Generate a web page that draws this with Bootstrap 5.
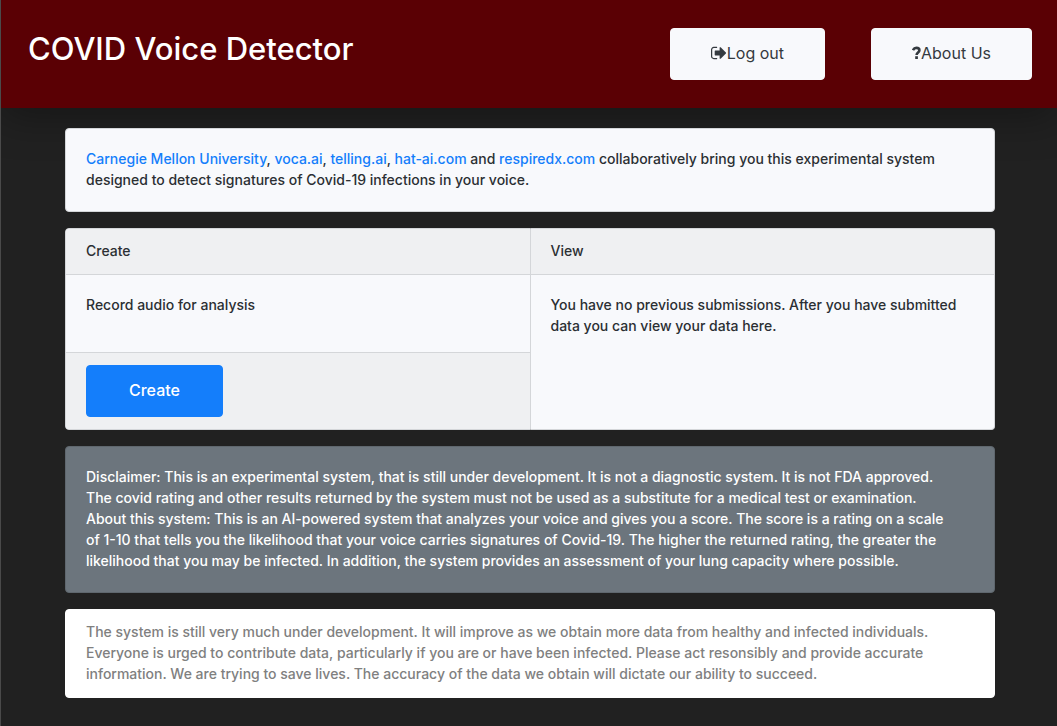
<!DOCTYPE html>
<html lang="en">
<head>
<meta charset="utf-8">
<meta name="viewport" content="width=device-width, initial-scale=1">
<title>COVID Voice Detector</title>
<link href="https://cdn.jsdelivr.net/npm/bootstrap@5.3.0/dist/css/bootstrap.min.css" rel="stylesheet">
<style>
  body { background: #212121; color: #2b2f33; font-family: Inter, "Open Sans", sans-serif; font-size: 14px; font-weight: 500; line-height: 21px; border-left: 1px solid #4a4a4a; min-height: 100vh; }
  .top-bar { background: #5a0004; padding: 28px 25px 28px 27px; box-shadow: 0 8px 40px rgba(0, 0, 0, .35); }
  .top-bar h1 { font-size: 31px; line-height: 42px; font-weight: 500; }
  .top-actions { gap: 46px; }
  .btn { border-radius: 4px; font-size: 16px; line-height: 24px; padding: 12px 40px 14px; }
  .btn-light { --bs-btn-color: #343a40; --bs-btn-bg: #f8f9fc; --bs-btn-border-color: #f8f9fc; }
  .btn-primary { --bs-btn-bg: #147efb; --bs-btn-border-color: #147efb; font-weight: 500; padding-left: 42px; padding-right: 42px; }
  .btn svg { height: 16px; vertical-align: -2px; }
  main { padding: 20px 0 28px 2px; }
  .page-body { padding: 0 15px; gap: 16px; }
  .card { --bs-card-bg: #f8f9fc; --bs-card-border-color: #d4d6d9; --bs-card-border-radius: 4px; --bs-card-inner-border-radius: 3px; --bs-card-cap-bg: #eff0f2; --bs-card-color: #2b2f33; --bs-card-cap-padding-x: 20px; --bs-card-cap-padding-y: 12px; }
  .card-body { line-height: 21px; padding: 19px 20px 21px; }
  .card-header { padding-top: 11px; padding-bottom: 13px; }
  .card a { color: #147efb; text-decoration: none; }
  .card-dark { --bs-card-bg: #6c757d; --bs-card-border-color: #5f676e; --bs-card-color: #fff; }
  .card-note { --bs-card-bg: #fff; --bs-card-border-color: #fff; --bs-card-color: #808080; }
  .card-note .card-body { padding-top: 11px; padding-bottom: 13px; }
</style>
</head>
<body>
<header class="top-bar d-flex flex-wrap justify-content-between align-items-start">
  <h1 class="text-white mb-0">COVID Voice Detector</h1>
  <div class="top-actions d-flex flex-wrap">
    <button type="button" class="btn btn-light"><svg viewBox="0 0 1664 1536" width="16" fill="currentColor" aria-hidden="true"><path d="M640 1312q0 4 1 20t.5 26.500-3 23.500-10 19.500-20.500 6.500H288q-119 0-203.500-84.500T0 1120V416q0-119 84.500-203.500T288 128h320q13 0 22.500 9.500T640 160q0 4 1 20t.5 26.500-3 23.500-10 19.500T608 256H288q-66 0-113 47t-47 113v704q0 66 47 113t113 47h312q20 0 30 5t10 27zM1568 768q0 26-19 45l-544 544q-19 19-45 19t-45-19-19-45v-288H448q-26 0-45-19t-19-45V576q0-26 19-45t45-19h448V224q0-26 19-45t45-19 45 19l544 544q19 19 19 45z"/></svg>Log out</button>
    <button type="button" class="btn btn-light"><svg viewBox="0 0 9 16" width="9" fill="none" stroke="currentColor" aria-hidden="true"><path stroke-width="2.600" d="M1 5.200C1.700 3.500 3 2.900 4.400 2.900c1.700 0 3 .9 3 2.300C7.400 7.500 4.600 7.400 4.600 10"/><path fill="currentColor" stroke="none" d="M3.200 11.200h2.700V14H3.200z"/></svg>About Us</button>
  </div>
</header>
<main>
  <div class="container page-body d-flex flex-column">
    <section class="card">
      <div class="card-body"><a href="#">Carnegie Mellon University</a>, <a href="#">voca.ai</a>, <a href="#">telling.ai</a>, <a href="#">hat-ai.com</a> and <a href="#">respiredx.com</a> collaboratively bring you this experimental system designed to detect signatures of Covid-19 infections in your voice.</div>
    </section>
    <div class="card-group">
      <section class="card">
        <div class="card-header">Create</div>
        <div class="card-body"><p class="mb-3">Record audio for analysis</p></div>
        <div class="card-footer"><button type="button" class="btn btn-primary">Create</button></div>
      </section>
      <section class="card">
        <div class="card-header">View</div>
        <div class="card-body">You have no previous submissions. After you have submitted data you can view your data here.</div>
      </section>
    </div>
    <section class="card card-dark">
      <div class="card-body">Disclaimer: This is an experimental system, that is still under development. It is not a diagnostic system. It is not FDA approved. The&nbsp;covid rating and other results returned by the system must not be used as a substitute for a medical test or examination.<br>About this system: This is an AI-powered system that analyzes your voice and gives you a score. The score is a rating on a scale of&nbsp;1-10 that tells you the likelihood that your voice carries signatures of Covid-19. The higher the returned rating, the greater the likelihood that you may be infected. In addition, the system provides an assessment of your lung capacity where possible.</div>
    </section>
    <section class="card card-note">
      <div class="card-body">The system is still very much under development. It will improve as we obtain more data from healthy and infected individuals. Everyone is urged to contribute data, particularly if you are or have been infected. Please act resonsibly and provide accurate information. We are trying to save lives. The accuracy of the data we obtain will dictate our ability to succeed.</div>
    </section>
  </div>
</main>
<script src="https://cdn.jsdelivr.net/npm/bootstrap@5.3.0/dist/js/bootstrap.bundle.min.js"></script>
</body>
</html>
